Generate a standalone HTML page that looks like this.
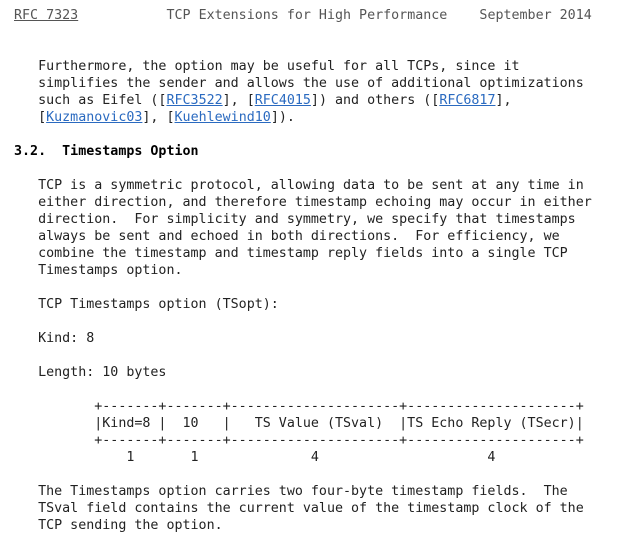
<!DOCTYPE html>
<html><head><meta charset="utf-8"><style>
html,body{margin:0;padding:0;background:#fff;width:630px;height:540px;overflow:hidden}
pre{margin:0;padding:7px 0 0 14px;font-family:"DejaVu Sans Mono","Liberation Mono",monospace;font-size:13.33px;line-height:17px;color:#222}
a{color:#2a6ac0;text-decoration:underline}
.h{color:#555}
.h a{color:#555}
b{font-weight:bold;color:#000}
</style></head><body><pre><span class="h"><a>RFC 7323</a>           TCP Extensions for High Performance    September 2014</span>


   Furthermore, the option may be useful for all TCPs, since it
   simplifies the sender and allows the use of additional optimizations
   such as Eifel ([<a>RFC3522</a>], [<a>RFC4015</a>]) and others ([<a>RFC6817</a>],
   [<a>Kuzmanovic03</a>], [<a>Kuehlewind10</a>]).

<b>3.2.  Timestamps Option</b>

   TCP is a symmetric protocol, allowing data to be sent at any time in
   either direction, and therefore timestamp echoing may occur in either
   direction.  For simplicity and symmetry, we specify that timestamps
   always be sent and echoed in both directions.  For efficiency, we
   combine the timestamp and timestamp reply fields into a single TCP
   Timestamps option.

   TCP Timestamps option (TSopt):

   Kind: 8

   Length: 10 bytes

          +-------+-------+---------------------+---------------------+
          |Kind=8 |  10   |   TS Value (TSval)  |TS Echo Reply (TSecr)|
          +-------+-------+---------------------+---------------------+
              1       1              4                     4

   The Timestamps option carries two four-byte timestamp fields.  The
   TSval field contains the current value of the timestamp clock of the
   TCP sending the option.
</pre></body></html>
